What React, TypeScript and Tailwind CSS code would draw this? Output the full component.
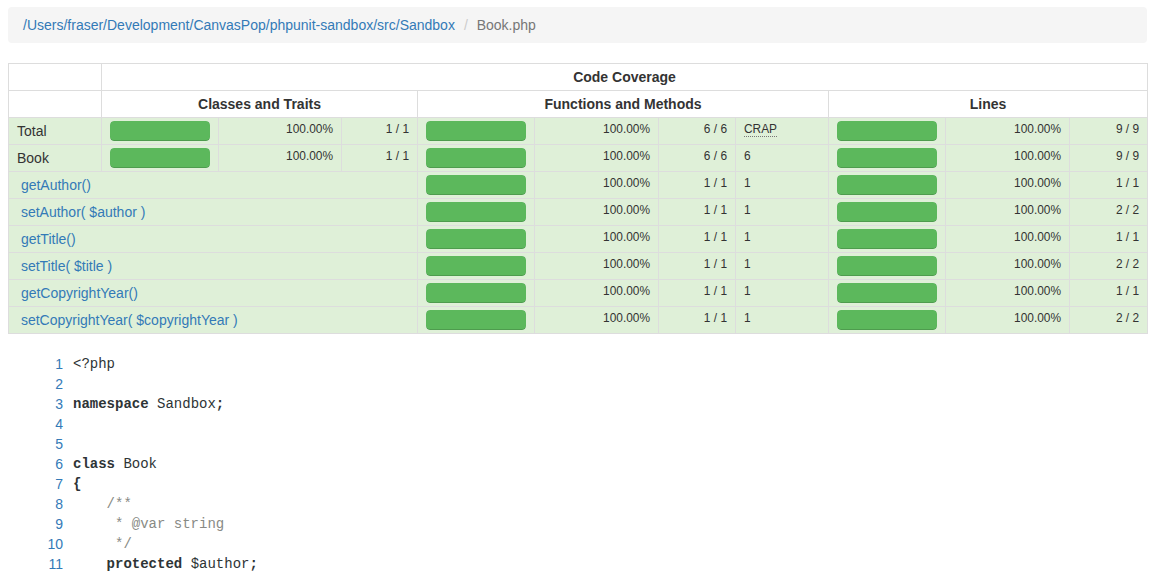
const sans = "font-['Liberation_Sans',Arial,sans-serif]";

const cell = "border border-[#ddd] px-2 py-[3px] align-top bg-[#dff0d8]";
const smallCell = cell + " text-[11.9px] leading-[17px]";

function Bar() {
  return (
    <div className="h-5 w-full overflow-hidden rounded bg-[#f5f5f5] shadow-[inset_0_1px_2px_rgba(0,0,0,0.1)]">
      <div className="h-full w-full rounded bg-[#5cb85c] shadow-[inset_0_-1px_0_rgba(0,0,0,0.15)]" />
    </div>
  );
}

function Metric({ pct, count }: { pct: string; count: string }) {
  return (
    <>
      <td className={cell}>
        <Bar />
      </td>
      <td className={smallCell + " text-right"}>{pct}</td>
      <td className={smallCell + " text-right"}>{count}</td>
    </>
  );
}

const methods = [
  { name: "getAuthor()", lines: "1 / 1" },
  { name: "setAuthor( $author )", lines: "2 / 2" },
  { name: "getTitle()", lines: "1 / 1" },
  { name: "setTitle( $title )", lines: "2 / 2" },
  { name: "getCopyrightYear()", lines: "1 / 1" },
  { name: "setCopyrightYear( $copyrightYear )", lines: "2 / 2" },
];

type Tok = { t: string; k?: "kw" | "cm" };
const code: Tok[][] = [
  [{ t: "<?php" }],
  [],
  [{ t: "namespace", k: "kw" }, { t: " Sandbox" }, { t: ";", k: "kw" }],
  [],
  [],
  [{ t: "class", k: "kw" }, { t: " Book" }],
  [{ t: "{", k: "kw" }],
  [{ t: "    /**", k: "cm" }],
  [{ t: "     * @var string", k: "cm" }],
  [{ t: "     */", k: "cm" }],
  [{ t: "    " }, { t: "protected", k: "kw" }, { t: " $author" }, { t: ";", k: "kw" }],
];

const widths = [
  "w-[93px]", "w-[117px]", "w-[123px]", "w-[76px]", "w-[117px]", "w-[124px]",
  "w-[77px]", "w-[93px]", "w-[117px]", "w-[124px]", "w-[78px]",
];

export default function App() {
  return (
    <div className={`min-h-screen bg-white px-2 pt-[7px] text-[14px] leading-5 text-[#333] ${sans}`}>
      {/* breadcrumb */}
      <ol className="mb-5 flex w-[1139px] gap-1 rounded bg-[#f5f5f5] px-[15px] py-2">
        <li>
          <a className="text-[#337ab7]">/Users/fraser/Development/CanvasPop/phpunit-sandbox/src/Sandbox</a>
        </li>
        <li className="text-[#777]">
          <span className="px-[5px] text-[#ccc]">/&nbsp;</span>Book.php
        </li>
      </ol>

      {/* coverage table */}
      <table className="mb-5 w-[1139px] table-fixed border-collapse">
        <colgroup>
          {widths.map((w, i) => (
            <col key={i} className={w} />
          ))}
        </colgroup>
        <thead>
          <tr>
            <td className="border border-[#ddd] px-2 py-[3px]">&nbsp;</td>
            <td colSpan={10} className="border border-[#ddd] px-2 py-[3px] text-center font-bold">
              Code Coverage
            </td>
          </tr>
          <tr>
            <td className="border border-[#ddd] px-2 py-[3px]">&nbsp;</td>
            <td colSpan={3} className="border border-[#ddd] px-2 py-[3px] text-center font-bold">
              Classes and Traits
            </td>
            <td colSpan={4} className="border border-[#ddd] px-2 py-[3px] text-center font-bold">
              Functions and Methods
            </td>
            <td colSpan={3} className="border border-[#ddd] px-2 py-[3px] text-center font-bold">
              Lines
            </td>
          </tr>
        </thead>
        <tbody>
          <tr>
            <td className={cell}>Total</td>
            <Metric pct="100.00%" count="1 / 1" />
            <Metric pct="100.00%" count="6 / 6" />
            <td className={smallCell}>
              <abbr className="border-b border-dotted border-[#777] no-underline">CRAP</abbr>
            </td>
            <Metric pct="100.00%" count="9 / 9" />
          </tr>
          <tr>
            <td className={cell}>Book</td>
            <Metric pct="100.00%" count="1 / 1" />
            <Metric pct="100.00%" count="6 / 6" />
            <td className={smallCell}>6</td>
            <Metric pct="100.00%" count="9 / 9" />
          </tr>
          {methods.map((m) => (
            <tr key={m.name}>
              <td colSpan={4} className={cell}>
                &nbsp;<a className="text-[#337ab7]">{m.name}</a>
              </td>
              <Metric pct="100.00%" count="1 / 1" />
              <td className={smallCell}>1</td>
              <Metric pct="100.00%" count={m.lines} />
            </tr>
          ))}
        </tbody>
      </table>

      {/* source */}
      <table className="border-collapse">
        <tbody>
          {code.map((line, i) => (
            <tr key={i} className="h-5">
              <td className="w-[60px] px-[5px] py-0 text-right align-top text-[#337ab7]">{i + 1}</td>
              <td className="whitespace-pre px-[5px] py-0 align-top font-['Liberation_Mono','Courier_New',monospace] text-[14px] text-[#2e3436]">
                {line.map((tok, j) => (
                  <span
                    key={j}
                    className={
                      tok.k === "kw" ? "font-bold" : tok.k === "cm" ? "text-[#888a85]" : ""
                    }
                  >
                    {tok.t}
                  </span>
                ))}
              </td>
            </tr>
          ))}
        </tbody>
      </table>
    </div>
  );
}
